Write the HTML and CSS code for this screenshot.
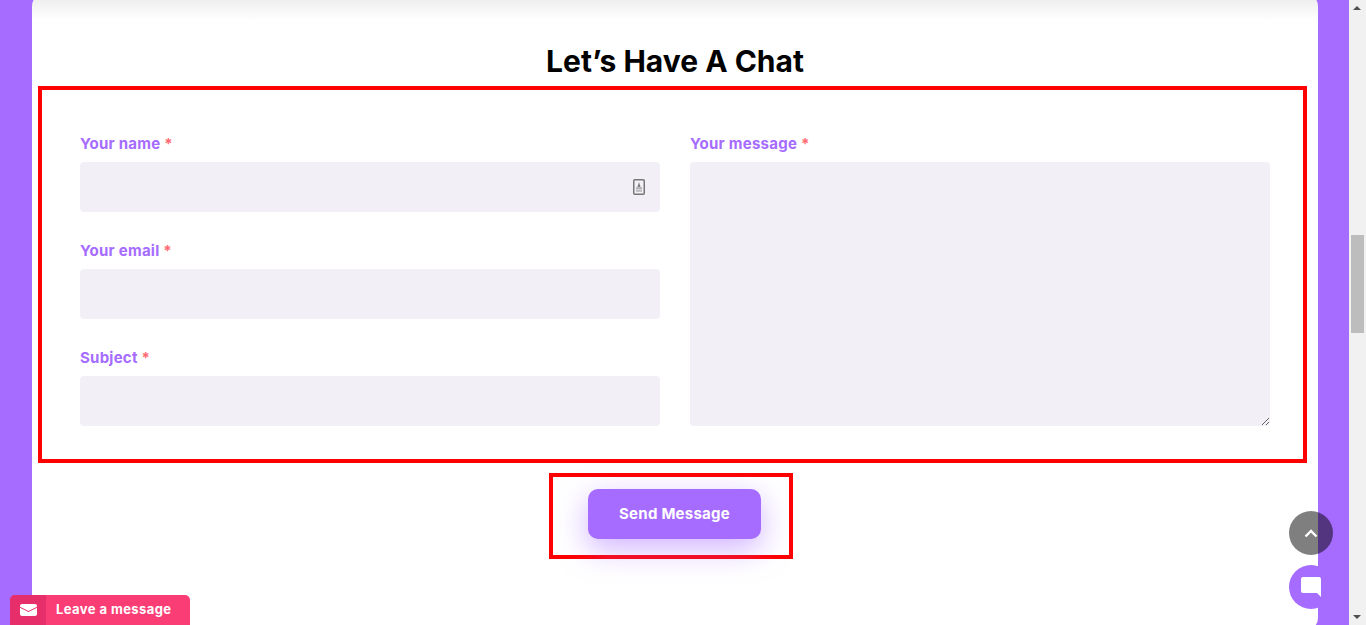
FILE: index.html
```html
<!DOCTYPE html>
<html lang="en">
<head>
<meta charset="utf-8">
<title>Let's Have A Chat</title>
<link rel="stylesheet" href="styles.css">
</head>
<body>
<div class="page">
  <main class="main">
    <section class="card">
      <h2 class="title">Let’s Have A Chat</h2>
      <form class="form-box">
        <div class="col">
          <div class="field">
            <label class="label">Your name <span class="req">*</span></label>
            <div class="input-wrap">
              <input class="input" type="text">
              <svg class="contact-icon" width="12" height="16" viewBox="0 0 12 16"><rect x=".75" y=".75" width="10.5" height="14.5" rx="1" fill="#f3f1f7" stroke="#777" stroke-width="1.5"/><path d="M6 3 7.600 8H4.400z" fill="#808080"/><rect x="3" y="8.500" width="6" height="1.200" fill="#8f8f8f"/><rect x="3" y="10.500" width="6" height="2.300" fill="#bbb"/></svg>
            </div>
          </div>
          <div class="field">
            <label class="label">Your email <span class="req">*</span></label>
            <input class="input" type="email">
          </div>
          <div class="field">
            <label class="label">Subject <span class="req">*</span></label>
            <input class="input" type="text">
          </div>
        </div>
        <div class="col">
          <div class="field field-grow">
            <label class="label">Your message <span class="req">*</span></label>
            <textarea class="textarea"></textarea>
          </div>
        </div>
      </form>
      <div class="send-box">
        <button class="send" type="button">Send Message</button>
      </div>
    </section>
  </main>
  <div class="scrollbar">
    <span class="arrow arrow-up"></span>
    <div class="track"><div class="thumb"></div></div>
    <span class="arrow arrow-down"></span>
  </div>
</div>

<button class="leave" type="button">
  <span class="leave-icon">
    <svg width="17" height="12" viewBox="0 0 17 12"><path d="M2 0h13a2 2 0 0 1 2 2v.8L8.500 7 0 2.800V2a2 2 0 0 1 2-2zM0 3.800 8.500 8 17 3.800V10a2 2 0 0 1-2 2H2a2 2 0 0 1-2-2z" fill="#fff"/></svg>
  </span>
  <span class="leave-text">Leave a message</span>
</button>

<button class="to-top" type="button" aria-label="Back to top">
  <svg width="14" height="9" viewBox="0 0 14 9"><path d="M1.500 7.500 7 2l5.500 5.500" fill="none" stroke="#fff" stroke-width="2.400"/></svg>
</button>
<button class="chat" type="button" aria-label="Chat">
  <svg width="20" height="20" viewBox="0 0 20 20"><path d="M2 0h16a2 2 0 0 1 2 2v18l-4-4H2a2 2 0 0 1-2-2V2a2 2 0 0 1 2-2z" fill="#fff"/></svg>
</button>
</body>
</html>
```
FILE: styles.css
```css
* { box-sizing: border-box; }
html, body { margin: 0; height: 625px; overflow: hidden; }
body { font-family: "Inter", "Liberation Sans", sans-serif; background: #a66bff; }

.page { display: flex; height: 625px; overflow: hidden; }
.main { flex: 1; min-width: 0; padding: 0 31px 0 32px; overflow: hidden; }

.card {
  margin-top: -6px;
  height: 636px;
  padding-top: 6px;
  border-radius: 12px;
  background: linear-gradient(#efefef 6px, #ffffff 26px);
  display: flex;
  flex-direction: column;
  align-items: center;
}

.title {
  margin: 0;
  padding-top: 43px;
  height: 86px;
  font-family: "Inter", "Liberation Sans", sans-serif;
  font-weight: 700;
  font-size: 30px;
  line-height: 36px;
  color: #000;
  text-align: center;
  white-space: nowrap;
}

.form-box {
  width: 1269px;
  height: 377px;
  margin-right: 5px;
  padding: 34px 33px 33px 38px;
  border: 4px solid #ff0000;
  display: grid;
  grid-template-columns: 580px 580px;
  column-gap: 30px;
}

.col { display: flex; flex-direction: column; gap: 19px; }
.field { display: flex; flex-direction: column; }
.field-grow { flex: 1; }

.label {
  height: 38px;
  padding-top: 10px;
  font-family: "Inter", "Liberation Sans", sans-serif;
  font-weight: 700;
  font-size: 15px;
  letter-spacing: 0.25px;
  line-height: 20px;
  color: #a66bff;
}
.req { color: #ff6b72; }

.input-wrap { position: relative; }
.input, .textarea {
  display: block;
  width: 100%;
  border: 0;
  border-radius: 4px;
  background: #f2f0f6;
  outline: 0;
  margin: 0;
}
.input { height: 50px; }
.textarea { flex: 1; height: 264px; }

.contact-icon { position: absolute; top: 17px; right: 15px; }

.send-box {
  width: 244px;
  height: 86px;
  margin-top: 10px;
  margin-right: 8px;
  padding: 12px 0 0 7px;
  border: 4px solid #ff0000;
  display: flex;
  justify-content: center;
}
.send {
  width: 173px;
  height: 50px;
  padding: 0 0 1px;
  border: 0;
  border-radius: 10px;
  background: #a66bff;
  color: #fff;
  font-family: "Inter", "Liberation Sans", sans-serif;
  font-weight: 700;
  font-size: 15px;
  letter-spacing: 0.25px;
  box-shadow: 0 10px 30px rgba(166, 107, 255, 0.5);
}

.scrollbar {
  width: 17px;
  flex: none;
  background: #f1f1f1;
  display: flex;
  flex-direction: column;
  align-items: center;
}
.arrow { flex: none; width: 17px; height: 17px; position: relative; }
.arrow::after {
  content: "";
  position: absolute;
  left: 4px;
  border-left: 4px solid transparent;
  border-right: 4px solid transparent;
}
.arrow-up::after { top: 6px; border-bottom: 4px solid #505050; }
.arrow-down::after { top: 7px; border-top: 4px solid #505050; }
.track { flex: 1; width: 100%; padding: 218px 2px 0 2px; }
.thumb { height: 98px; background: #bdbdbd; }

.leave {
  position: fixed;
  left: 10px;
  bottom: 0;
  width: 180px;
  height: 30px;
  padding: 0;
  border: 0;
  border-radius: 5px 5px 0 0;
  background: #fb3d76;
  color: #fff;
  display: flex;
  align-items: center;
  overflow: hidden;
}
.leave-icon {
  width: 36px;
  height: 30px;
  background: #e62e6a;
  display: flex;
  align-items: center;
  justify-content: center;
}
.leave-text {
  margin-left: 10px;
  margin-top: -2px;
  font-family: "Inter", "Liberation Sans", sans-serif;
  font-weight: 700;
  font-size: 13px;
  letter-spacing: 0.42px;
  white-space: nowrap;
}

.to-top, .chat {
  position: fixed;
  left: 1289px;
  width: 44px;
  height: 44px;
  padding: 0;
  border: 0;
  border-radius: 50%;
  display: flex;
  align-items: center;
  justify-content: center;
}
.to-top { top: 511px; background: rgba(0, 0, 0, 0.5); }
.chat { top: 565px; background: #a66bff; }
```
